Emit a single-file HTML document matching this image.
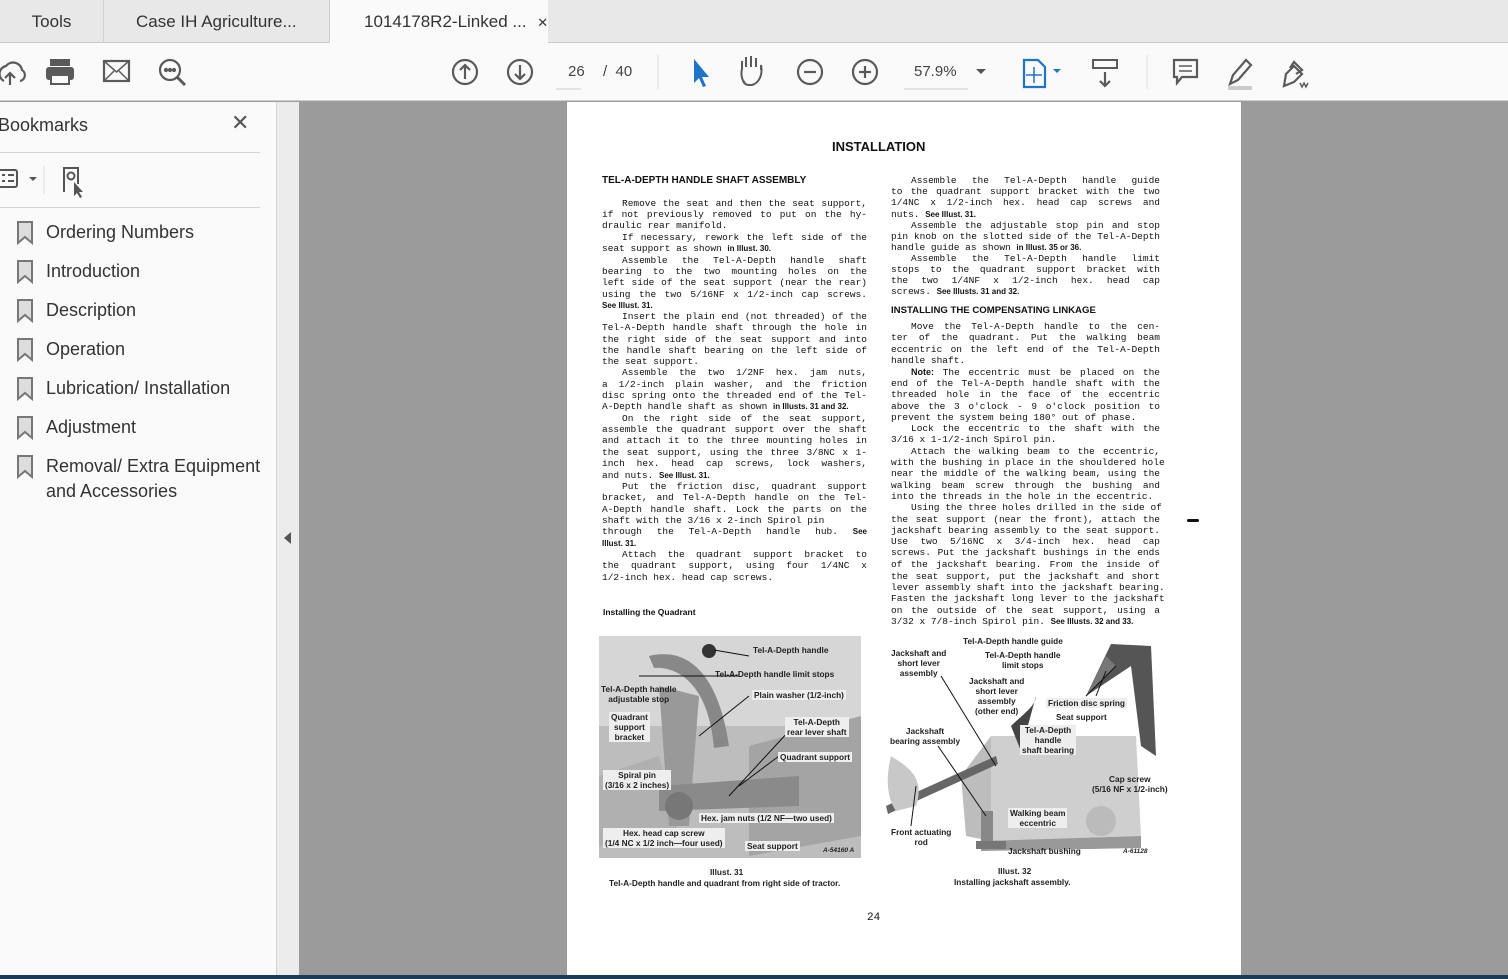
<!DOCTYPE html>
<html><head><meta charset="utf-8">
<style>
*{margin:0;padding:0;box-sizing:border-box}
body{width:1508px;height:979px;overflow:hidden;background:#9b9b9b;font-family:"Liberation Sans",sans-serif;position:relative}
.abs{position:absolute}
#tabs{left:0;top:0;width:1508px;height:43px;background:#e8e8e8;border-bottom:1px solid #c9c9c9}
.tab{position:absolute;top:0;height:43px;font-size:17px;color:#333;line-height:43px;white-space:nowrap;overflow:hidden}
#tb{left:0;top:43px;width:1508px;height:58px;background:#fafafa;border-bottom:1px solid #cfcfcf}
#side{left:0;top:102px;width:276px;height:873px;background:#fafafa}
#strip{left:276px;top:102px;width:23px;height:873px;background:#ececec;border-left:1px solid #d4d4d4}
.bm{position:absolute;left:46px;font-size:18px;color:#333;line-height:25px}
#page{left:567px;top:102px;width:674px;height:873px;background:#fff}
.ln{position:absolute;font-family:"Liberation Mono",monospace;font-size:9.5px;letter-spacing:0;white-space:nowrap;color:#111;height:12px;line-height:12px;text-align:justify;text-align-last:justify}
.L{left:602px;width:265px}
.R{left:891px;width:269px}
.e{text-align-last:left}
.i{text-indent:20px}
.s{font-family:"Liberation Sans",sans-serif;font-size:8px;font-weight:bold;letter-spacing:0}
.h{position:absolute;font-family:"Liberation Sans",sans-serif;font-weight:bold;font-size:10px;color:#111;letter-spacing:0}
.lab{position:absolute;font-family:"Liberation Sans",sans-serif;font-weight:bold;font-size:8.3px;color:#222;line-height:10px;text-align:center;white-space:nowrap}
.bx{background:#eee;padding:0 2px}
</style></head><body>
<div id="tabs" class="abs">
 <div class="tab" style="left:0;width:104px;border-right:1px solid #cfcfcf;text-align:center;">Tools</div>
 <div class="tab" style="left:104px;width:226px;border-right:1px solid #cfcfcf;padding-left:32px;">Case IH Agriculture...</div>
 <div class="tab" style="left:330px;width:218px;background:#fafafa;height:44px;padding-left:34px;">1014178R2-Linked ... <span style="font-size:13px;margin-left:6px">✕</span></div>
</div>
<div id="tb" class="abs">
<svg width="1508" height="58" style="position:absolute;left:0;top:0" fill="none" stroke="#5a5a5a" stroke-width="2.2">
 <path d="M4 38 a8 8 0 0 1 2 -15 a9 9 0 0 1 16 4 a6 6 0 0 1 -2 11" /><path d="M10 42 v-12 m-5 5 l5 -5 l5 5"/>
 <rect x="50" y="16" width="20" height="7" fill="#5a5a5a" stroke="none"/><rect x="46" y="24" width="28" height="13" rx="3" fill="#5a5a5a" stroke="none"/><rect x="51" y="32" width="18" height="9" fill="#fafafa" stroke="#5a5a5a" stroke-width="2"/>
 <rect x="104" y="18" width="25" height="20"/><path d="M104 18 l12.5 11 l12.5 -11 M104 38 l10 -10 M129 38 l-10 -10" stroke-width="1.5"/>
 <circle cx="170" cy="27" r="10"/><path d="M177 34 l8 8" stroke-width="3"/><circle cx="166" cy="27" r="1" fill="#5a5a5a"/><circle cx="170" cy="27" r="1" fill="#5a5a5a"/><circle cx="174" cy="27" r="1" fill="#5a5a5a"/>
 <circle cx="465" cy="29" r="12"/><path d="M465 36 v-14 m-5 5 l5 -5 l5 5"/>
 <circle cx="520" cy="29" r="12"/><path d="M520 22 v14 m-5 -5 l5 5 l5 -5"/>
 <path d="M556 46 h25" stroke="#ccc" stroke-width="1"/>
 <path d="M658 12 v34" stroke="#ddd" stroke-width="1"/>
 <path d="M694 16 l0 24 l5 -5 l4 9 l3 -1 l-4 -9 l7 0 z" fill="#1f74c7" stroke="none"/>
 <path d="M745 40 c-4 -4 -4 -10 -3 -14 v-8 m4 6 v-10 m5 10 v-11 m5 11 v-9 m5 12 v-5 c2 10 -2 18 -9 20 h-3 c-3 0 -5 -2 -6 -4" stroke-width="2"/>
 <circle cx="810" cy="29" r="12"/><path d="M804 29 h12"/>
 <circle cx="865" cy="29" r="12"/><path d="M859 29 h12 M865 23 v12"/>
 <path d="M904 46 h64" stroke="#ccc" stroke-width="1"/>
 <path d="M976 26 l5 5 l5 -5 z" fill="#555" stroke="none"/>
 <path d="M1024 17 h14 l7 7 v20 h-21 z" stroke="#1f74c7" stroke-width="2.2"/><path d="M1034 24 v16 M1026 32 h16" stroke="#1f74c7" stroke-width="1.5"/>
 <path d="M1053 26 l4 4 l4 -4 z" fill="#1f74c7" stroke="none"/>
 <rect x="1093" y="17" width="24" height="8" stroke-width="2"/><path d="M1105 29 v14 m-5 -5 l5 5 l5 -5"/>
 <path d="M1147 12 v34" stroke="#ddd" stroke-width="1"/>
 <path d="M1174 17 h23 v17 h-15 l-5 6 v-6 h-3 z"/><path d="M1179 23 h13 M1179 28 h13" stroke-width="1.5"/>
 <path d="M1230 41 l3 -9 l13 -15 l5 5 l-13 15 z"/><path d="M1228 45 h24" stroke="#ccc" stroke-width="4"/>
 <path d="M1284 43 l2 -12 l8 -8 l8 8 l-8 8 z M1290 25 l4 -6 l8 8 l-6 4"/><path d="M1300 40 l2 4 l2 -4 l2 4 l2 -4" stroke-width="1.5"/>
</svg>
<div class="abs" style="left:568px;top:20px;font-size:15px;color:#444">26</div>
<div class="abs" style="left:603px;top:20px;font-size:15px;color:#444">/&nbsp; 40</div>
<div class="abs" style="left:914px;top:20px;font-size:15px;color:#444">57.9%</div>
</div>
<div id="side" class="abs">
 <div class="abs" style="left:-2px;top:13px;font-size:18px;color:#333">Bookmarks</div>
 <div class="abs" style="left:231px;top:8px;font-size:22px;color:#555">✕</div>
 <div class="abs" style="left:0;top:50px;width:260px;height:1px;background:#d4d4d4"></div>
 <svg class="abs" style="left:0;top:60px" width="100" height="36" fill="none" stroke="#555" stroke-width="2">
  <rect x="-3" y="8" width="20" height="17" rx="2"/><path d="M2 13 h3 M8 13 h6 M2 19 h3 M8 19 h6"/><path d="M29 15 l4 4 l4 -4 z" fill="#555" stroke="none"/>
  <path d="M44 4 v28" stroke="#ddd" stroke-width="1"/>
  <path d="M64 30 v-24 h14 v16"/><circle cx="71" cy="14" r="3.5"/><path d="M74 20 l0 14 l3 -3 l3 5 l2 -1 l-3 -5 h4 z" fill="#555" stroke="none"/>
 </svg>
 <div class="abs" style="left:0;top:105px;width:260px;height:1px;background:#d4d4d4"></div>
</div>
<svg class="abs" style="left:0;top:0" width="276" height="979" fill="#ddd" stroke="#777" stroke-width="2">
 <path d="M18 222 v21 l7 -6 l7 6 v-21 z"/>
 <path d="M18 261 v21 l7 -6 l7 6 v-21 z"/>
 <path d="M18 300 v21 l7 -6 l7 6 v-21 z"/>
 <path d="M18 339 v21 l7 -6 l7 6 v-21 z"/>
 <path d="M18 378 v21 l7 -6 l7 6 v-21 z"/>
 <path d="M18 417 v21 l7 -6 l7 6 v-21 z"/>
 <path d="M18 456 v21 l7 -6 l7 6 v-21 z"/>
</svg>
<div class="bm" style="top:220px">Ordering Numbers</div>
<div class="bm" style="top:259px">Introduction</div>
<div class="bm" style="top:298px">Description</div>
<div class="bm" style="top:337px">Operation</div>
<div class="bm" style="top:376px">Lubrication/ Installation</div>
<div class="bm" style="top:415px">Adjustment</div>
<div class="bm" style="top:454px">Removal/ Extra Equipment<br>and Accessories</div>
<div id="strip" class="abs"></div>
<div class="abs" style="left:284px;top:532px;width:0;height:0;border-top:6px solid transparent;border-bottom:6px solid transparent;border-right:7px solid #555"></div>
<div id="page" class="abs"></div>
<div class="abs" style="left:0;top:975px;width:1508px;height:4px;background:#1c3b55"></div>

<div class="h" style="left:832px;top:139px;font-size:13px">INSTALLATION</div>
<div class="h" style="left:602px;top:175px">TEL-A-DEPTH HANDLE SHAFT ASSEMBLY</div>

<div class="ln L i" style="top:198px">Remove the seat and then the seat support,</div>
<div class="ln L" style="top:209px">if not previously removed to put on the hy-</div>
<div class="ln L e" style="top:220px">draulic rear manifold.</div>
<div class="ln L i" style="top:232px">If necessary, rework the left side of the</div>
<div class="ln L e" style="top:243px">seat support as shown <span class="s">in Illust. 30.</span></div>
<div class="ln L i" style="top:255px">Assemble the Tel-A-Depth handle shaft</div>
<div class="ln L" style="top:266px">bearing to the two mounting holes on the</div>
<div class="ln L" style="top:277px">left side of the seat support (near the rear)</div>
<div class="ln L" style="top:289px">using the two 5/16NF x 1/2-inch cap screws.</div>
<div class="ln L e" style="top:300px"><span class="s">See Illust. 31.</span></div>
<div class="ln L i" style="top:311px">Insert the plain end (not threaded) of the</div>
<div class="ln L" style="top:322px">Tel-A-Depth handle shaft through the hole in</div>
<div class="ln L" style="top:334px">the right side of the seat support and into</div>
<div class="ln L" style="top:345px">the handle shaft bearing on the left side of</div>
<div class="ln L e" style="top:356px">the seat support.</div>
<div class="ln L i" style="top:367px">Assemble the two 1/2NF hex. jam nuts,</div>
<div class="ln L" style="top:379px">a 1/2-inch plain washer, and the friction</div>
<div class="ln L" style="top:390px">disc spring onto the threaded end of the Tel-</div>
<div class="ln L e" style="top:401px">A-Depth handle shaft as shown <span class="s">in Illusts. 31 and 32.</span></div>
<div class="ln L i" style="top:413px">On the right side of the seat support,</div>
<div class="ln L" style="top:424px">assemble the quadrant support over the shaft</div>
<div class="ln L" style="top:435px">and attach it to the three mounting holes in</div>
<div class="ln L" style="top:447px">the seat support, using the three 3/8NC x 1-</div>
<div class="ln L" style="top:458px">inch hex. head cap screws, lock washers,</div>
<div class="ln L e" style="top:470px">and nuts. <span class="s">See Illust. 31.</span></div>
<div class="ln L i" style="top:481px">Put the friction disc, quadrant support</div>
<div class="ln L" style="top:492px">bracket, and Tel-A-Depth handle on the Tel-</div>
<div class="ln L" style="top:504px">A-Depth handle shaft. Lock the parts on the</div>
<div class="ln L e" style="top:515px">shaft with the 3/16 x 2-inch Spirol pin</div>
<div class="ln L" style="top:526px">through the Tel-A-Depth handle hub. <span class="s">See</span></div>
<div class="ln L e" style="top:538px"><span class="s">Illust. 31.</span></div>
<div class="ln L i" style="top:549px">Attach the quadrant support bracket to</div>
<div class="ln L" style="top:560px">the quadrant support, using four 1/4NC x</div>
<div class="ln L e" style="top:572px">1/2-inch hex. head cap screws.</div>
<div class="h" style="left:603px;top:607px;font-size:8.5px">Installing the Quadrant</div>

<div class="ln R i" style="top:175px">Assemble the Tel-A-Depth handle guide</div>
<div class="ln R" style="top:186px">to the quadrant support bracket with the two</div>
<div class="ln R" style="top:197px">1/4NC x 1/2-inch hex. head cap screws and</div>
<div class="ln R e" style="top:209px">nuts. <span class="s">See Illust. 31.</span></div>
<div class="ln R i" style="top:220px">Assemble the adjustable stop pin and stop</div>
<div class="ln R" style="top:231px">pin knob on the slotted side of the Tel-A-Depth</div>
<div class="ln R e" style="top:242px">handle guide as shown <span class="s">in Illust. 35 or 36.</span></div>
<div class="ln R i" style="top:253px">Assemble the Tel-A-Depth handle limit</div>
<div class="ln R" style="top:264px">stops to the quadrant support bracket with</div>
<div class="ln R" style="top:275px">the two 1/4NF x 1/2-inch hex. head cap</div>
<div class="ln R e" style="top:286px">screws. <span class="s">See Illusts. 31 and 32.</span></div>
<div class="h" style="left:891px;top:305px;font-size:9.6px">INSTALLING THE COMPENSATING LINKAGE</div>
<div class="ln R i" style="top:321px">Move the Tel-A-Depth handle to the cen-</div>
<div class="ln R" style="top:332px">ter of the quadrant. Put the walking beam</div>
<div class="ln R" style="top:344px">eccentric on the left end of the Tel-A-Depth</div>
<div class="ln R e" style="top:355px">handle shaft.</div>
<div class="ln R i" style="top:366px"><b style="font-family:'Liberation Sans';font-size:9px">Note:</b> The eccentric must be placed on the</div>
<div class="ln R" style="top:378px">end of the Tel-A-Depth handle shaft with the</div>
<div class="ln R" style="top:389px">threaded hole in the face of the eccentric</div>
<div class="ln R" style="top:401px">above the 3 o'clock - 9 o'clock position to</div>
<div class="ln R e" style="top:412px">prevent the system being 180° out of phase.</div>
<div class="ln R i" style="top:423px">Lock the eccentric to the shaft with the</div>
<div class="ln R e" style="top:434px">3/16 x 1-1/2-inch Spirol pin.</div>
<div class="ln R i" style="top:446px">Attach the walking beam to the eccentric,</div>
<div class="ln R" style="top:457px">with the bushing in place in the shouldered hole</div>
<div class="ln R" style="top:468px">near the middle of the walking beam, using the</div>
<div class="ln R" style="top:480px">walking beam screw through the bushing and</div>
<div class="ln R e" style="top:491px">into the threads in the hole in the eccentric.</div>
<div class="ln R i" style="top:502px">Using the three holes drilled in the side of</div>
<div class="ln R" style="top:514px">the seat support (near the front), attach the</div>
<div class="ln R" style="top:525px">jackshaft bearing assembly to the seat support.</div>
<div class="ln R" style="top:536px">Use two 5/16NC x 3/4-inch hex. head cap</div>
<div class="ln R" style="top:547px">screws. Put the jackshaft bushings in the ends</div>
<div class="ln R" style="top:559px">of the jackshaft bearing. From the inside of</div>
<div class="ln R" style="top:571px">the seat support, put the jackshaft and short</div>
<div class="ln R" style="top:582px">lever assembly shaft into the jackshaft bearing.</div>
<div class="ln R" style="top:593px">Fasten the jackshaft long lever to the jackshaft</div>
<div class="ln R" style="top:605px">on the outside of the seat support, using a</div>
<div class="ln R e" style="top:616px">3/32 x 7/8-inch Spirol pin. <span class="s">See Illusts. 32 and 33.</span></div>
<div class="abs" style="left:1187px;top:519px;width:12px;height:3px;background:#111;border-radius:2px"></div>

<!-- Illustration 31 -->
<svg class="abs" style="left:599px;top:636px" width="262" height="222">
 <rect x="0" y="0" width="262" height="222" fill="#d6d6d6"/>
 <rect x="0" y="90" width="262" height="132" fill="#bdbdbd"/>
 <path d="M150 110 L262 80 L262 200 L150 220 z" fill="#a4a4a4"/>
 <path d="M0 140 L60 120 L80 200 L0 210 z" fill="#b0b0b0"/>
 <path d="M50 20 C90 10 120 40 130 110 L115 112 C110 50 80 30 55 32 z" fill="#888"/>
 <path d="M60 50 L100 60 L90 190 L70 190 z" fill="#999"/>
 <path d="M60 150 L200 140 L200 170 L60 175 z" fill="#8a8a8a"/>
 <circle cx="110" cy="15" r="7" fill="#333"/>
 <circle cx="80" cy="170" r="14" fill="#777"/>
 <path d="M150 20 L115 14 M140 40 L40 40 M150 60 L100 100 M190 95 L130 160 M180 120 L140 150" stroke="#111" stroke-width="1"/>
</svg>
<div class="lab" style="left:753px;top:645px">Tel-A-Depth handle</div>
<div class="lab" style="left:715px;top:669px">Tel-A-Depth handle limit stops</div>
<div class="lab" style="left:601px;top:684px">Tel-A-Depth handle<br>adjustable stop</div>
<div class="lab bx" style="left:752px;top:690px">Plain washer (1/2-inch)</div>
<div class="lab bx" style="left:609px;top:712px">Quadrant<br>support<br>bracket</div>
<div class="lab bx" style="left:785px;top:717px">Tel-A-Depth<br>rear lever shaft</div>
<div class="lab bx" style="left:778px;top:752px">Quadrant support</div>
<div class="lab bx" style="left:603px;top:770px">Spiral pin<br>(3/16 x 2 inches)</div>
<div class="lab bx" style="left:699px;top:813px">Hex. jam nuts (1/2 NF—two used)</div>
<div class="lab bx" style="left:603px;top:828px">Hex. head cap screw<br>(1/4 NC x 1/2 inch—four used)</div>
<div class="lab bx" style="left:745px;top:841px">Seat support</div>
<div class="lab" style="left:823px;top:846px;font-size:6.5px;font-style:italic">A-54160 A</div>
<div class="lab" style="left:710px;top:867px">Illust. 31</div>
<div class="lab" style="left:609px;top:878px">Tel-A-Depth handle and quadrant from right side of tractor.</div>

<!-- Illustration 32 -->
<svg class="abs" style="left:886px;top:636px" width="280" height="222">
 <path d="M225 8 L265 10 L270 120 L255 110 L245 30 L200 60 z" fill="#555"/>
 <path d="M200 60 L220 20 L230 30 z" fill="#777"/>
 <path d="M105 100 L250 100 L255 200 L95 205 z" fill="#cfcfcf"/>
 <path d="M95 205 L255 200 L255 212 L95 215 z" fill="#999"/>
 <path d="M75 140 L105 100 L105 205 L80 200 z" fill="#bdbdbd"/>
 <path d="M0 170 L110 120 L112 128 L2 178 z" fill="#666"/>
 <path d="M5 120 C20 130 40 140 30 170 L10 175 C0 160 0 140 5 120" fill="#c8c8c8"/>
 <rect x="95" y="175" width="12" height="30" fill="#888"/>
 <rect x="90" y="205" width="30" height="8" fill="#777"/>
 <circle cx="215" cy="185" r="15" fill="#bbb"/>
 <path d="M125 90 C135 80 150 70 150 60 L135 115 z" fill="#444"/>
 <path d="M55 40 L110 130 M52 110 L100 180 M30 150 L25 190 M220 35 L210 60 M200 60 L230 30" stroke="#111" stroke-width="1"/>
</svg>
<div class="lab" style="left:963px;top:636px">Tel-A-Depth handle guide</div>
<div class="lab" style="left:891px;top:648px">Jackshaft and<br>short lever<br>assembly</div>
<div class="lab" style="left:985px;top:650px">Tel-A-Depth handle<br>limit stops</div>
<div class="lab" style="left:969px;top:676px">Jackshaft and<br>short lever<br>assembly<br>(other end)</div>
<div class="lab bx" style="left:1046px;top:698px">Friction disc spring</div>
<div class="lab" style="left:1056px;top:712px">Seat support</div>
<div class="lab" style="left:890px;top:726px">Jackshaft<br>bearing assembly</div>
<div class="lab bx" style="left:1020px;top:725px">Tel-A-Depth<br>handle<br>shaft bearing</div>
<div class="lab" style="left:1092px;top:774px">Cap screw<br>(5/16 NF x 1/2-inch)</div>
<div class="lab bx" style="left:1008px;top:808px">Walking beam<br>eccentric</div>
<div class="lab" style="left:891px;top:827px">Front actuating<br>rod</div>
<div class="lab" style="left:1008px;top:846px">Jackshaft bushing</div>
<div class="lab" style="left:1123px;top:847px;font-size:6.5px;font-style:italic">A-61128</div>
<div class="lab" style="left:998px;top:866px">Illust. 32</div>
<div class="lab" style="left:954px;top:877px">Installing jackshaft assembly.</div>
<div class="ln" style="left:867px;top:912px;font-size:11px">24</div>
</body></html>
